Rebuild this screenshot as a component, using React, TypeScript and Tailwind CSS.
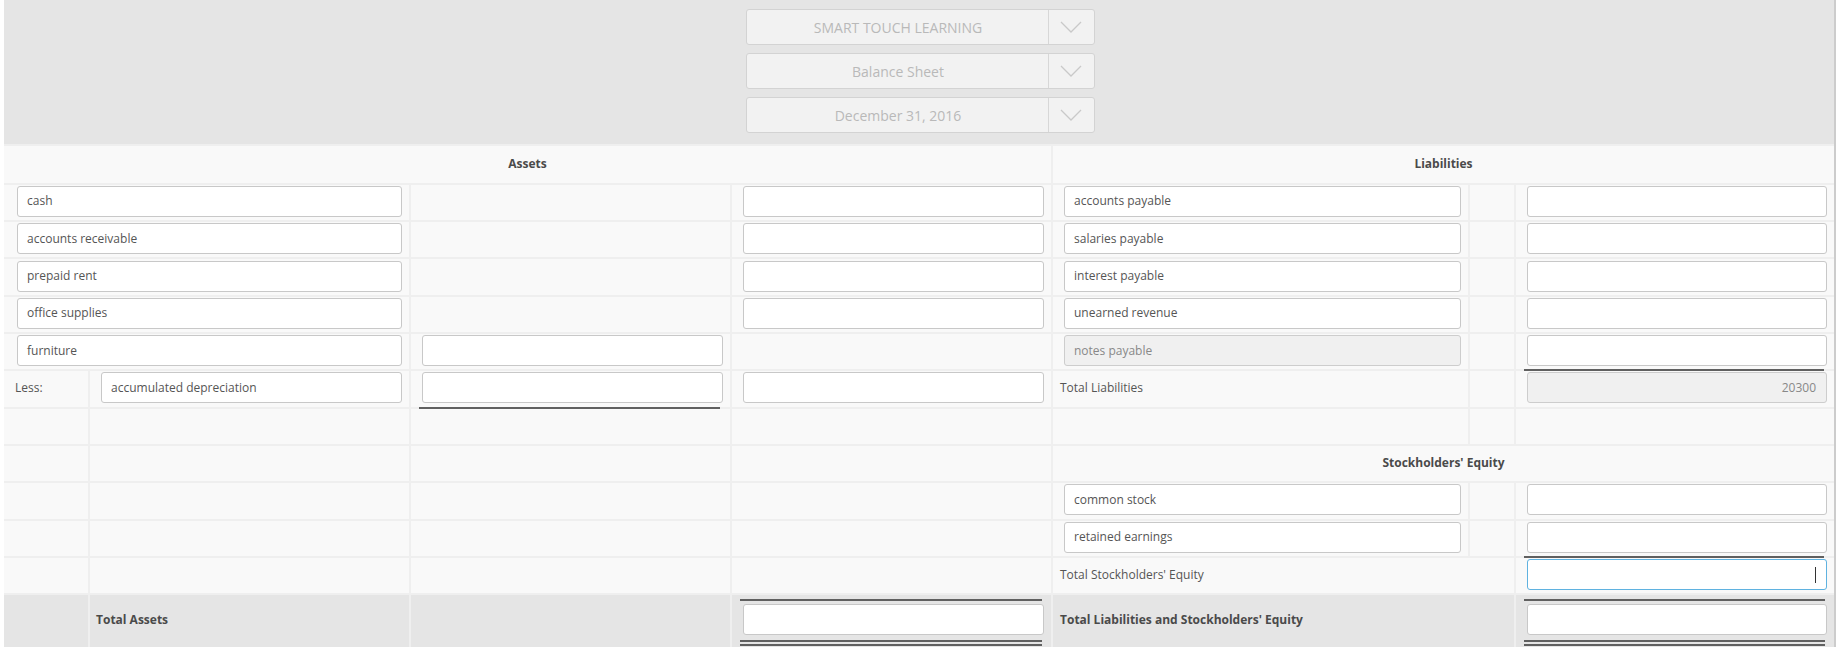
import type { ReactNode } from "react"

// column widths (outer, incl. 2px left rule)
const C1 = "w-[84px]"
const C2 = "w-[321px]"
const C12 = "w-[405px]"
const C3 = "w-[321px]"
const C4 = "w-[321px]"
const C5 = "w-[417px]"
const C6 = "w-[46px]"
const C56 = "w-[463px]"
const C7 = "w-[320px]"

function Chevron() {
  return (
    <svg width="22" height="12" viewBox="0 0 22 12" fill="none">
      <path d="M1 1 L11 11 L21 1" stroke="#c9c9c9" strokeWidth="1.3" />
    </svg>
  )
}

function Dropdown({ label }: { label: string }) {
  return (
    <div className="flex h-[36px] w-[349px] rounded-[3px] border border-[#d3d3d3] bg-[#f2f2f2]">
      <div className="flex flex-1 items-center justify-center pl-[2px] text-[14px] text-[#b9b9b9]">{label}</div>
      <div className="flex w-[46px] items-center justify-center border-l border-[#d7d7d7]">
        <Chevron />
      </div>
    </div>
  )
}

function Field({
  text,
  disabled,
  right,
  focused,
}: {
  text?: string
  disabled?: boolean
  right?: boolean
  focused?: boolean
}) {
  const tone = disabled
    ? "bg-[#f0f0f0] text-[#888] border-[#cdcdcd]"
    : focused
      ? "bg-white text-[#555] border-[#5fb2e0]"
      : "bg-white text-[#555] border-[#c8c8c8]"
  return (
    <div
      className={`flex h-[31px] w-full items-center rounded-[3px] border px-[9px] text-[12px] ${tone} ${
        right ? "justify-end pr-[10px]" : ""
      }`}
    >
      {text}
      {focused && <span className="h-[16px] w-[1px] bg-[#333]" />}
    </div>
  )
}

function Cell({
  w,
  first,
  under,
  pad,
  children,
}: {
  w: string
  first?: boolean
  under?: boolean
  pad?: string
  children?: ReactNode
}) {
  return (
    <div className={`flex shrink-0 flex-col ${w} ${first ? "" : "border-l-2 border-[#efefef]"}`}>
      <div className={`flex h-[35.33px] items-center pt-[1px] pb-[3px] ${pad ?? ""}`}>{children}</div>
      <div className="h-[2px] bg-[#efefef]">
        {under && <div className="ml-[8px] mr-[10px] h-full bg-[#606060]" />}
      </div>
    </div>
  )
}

const FP = "pl-[11px] pr-[7px]"
const FP1 = "pl-[13px] pr-[7px]"

function Label({ children, bold }: { children: ReactNode; bold?: boolean }) {
  return (
    <span className={`text-[12px] ${bold ? "font-bold text-[#4a4a4a]" : "text-[#555]"}`}>{children}</span>
  )
}

const assetRows = ["cash", "accounts receivable", "prepaid rent", "office supplies"]
const liabRows = ["accounts payable", "salaries payable", "interest payable", "unearned revenue"]

function EmptyLeft() {
  return (
    <>
      <Cell w={C1} first />
      <Cell w={C2} />
      <Cell w={C3} />
      <Cell w={C4} />
    </>
  )
}

export default function App() {
  return (
    <div className="h-[647px] w-[1840px] overflow-hidden bg-white font-['Open_Sans',sans-serif]">
      <div className="ml-[4px] w-[1832px] border-r-2 border-[#cccccc] bg-[#f9f9f9]">
        <div className="flex h-[144px] flex-col items-center gap-[8px] bg-[#e5e5e5] pt-[9px] pl-[2px]">
          <Dropdown label="SMART TOUCH LEARNING" />
          <Dropdown label="Balance Sheet" />
          <Dropdown label="December 31, 2016" />
        </div>

        {/* header */}
        <div className="flex border-t-2 border-[#efefef]">
          <div className="flex w-[1047px] shrink-0 flex-col">
            <div className="flex h-[36.7px] items-center justify-center">
              <Label bold>Assets</Label>
            </div>
            <div className="h-[2px] bg-[#efefef]" />
          </div>
          <div className="flex w-[783px] shrink-0 flex-col border-l-2 border-[#efefef]">
            <div className="flex h-[36.7px] items-center justify-center">
              <Label bold>Liabilities</Label>
            </div>
            <div className="h-[2px] bg-[#efefef]" />
          </div>
        </div>

        {assetRows.map((a, i) => (
          <div key={a} className="flex">
            <Cell w={C12} first pad={FP1}>
              <Field text={a} />
            </Cell>
            <Cell w={C3} />
            <Cell w={C4} pad={FP}>
              <Field />
            </Cell>
            <Cell w={C5} pad={FP}>
              <Field text={liabRows[i]} />
            </Cell>
            <Cell w={C6} />
            <Cell w={C7} pad={FP}>
              <Field />
            </Cell>
          </div>
        ))}

        {/* furniture / notes payable */}
        <div className="flex">
          <Cell w={C12} first pad={FP1}>
            <Field text="furniture" />
          </Cell>
          <Cell w={C3} pad={FP}>
            <Field />
          </Cell>
          <Cell w={C4} />
          <Cell w={C5} pad={FP}>
            <Field text="notes payable" disabled />
          </Cell>
          <Cell w={C6} />
          <Cell w={C7} pad={FP} under>
            <Field />
          </Cell>
        </div>

        {/* less / total liabilities */}
        <div className="flex">
          <Cell w={C1} first pad="pl-[11px]">
            <Label>Less:</Label>
          </Cell>
          <Cell w={C2} pad={FP}>
            <Field text="accumulated depreciation" />
          </Cell>
          <Cell w={C3} pad={FP} under>
            <Field />
          </Cell>
          <Cell w={C4} pad={FP}>
            <Field />
          </Cell>
          <Cell w={C5} pad="pl-[7px]">
            <Label>Total Liabilities</Label>
          </Cell>
          <Cell w={C6} />
          <Cell w={C7} pad={FP}>
            <Field text="20300" disabled right />
          </Cell>
        </div>

        {/* empty */}
        <div className="flex">
          <EmptyLeft />
          <Cell w={C5} />
          <Cell w={C6} />
          <Cell w={C7} />
        </div>

        {/* stockholders' equity header */}
        <div className="flex">
          <EmptyLeft />
          <Cell w="w-[783px]" pad="justify-center pt-0 pb-0">
            <Label bold>Stockholders' Equity</Label>
          </Cell>
        </div>

        <div className="flex">
          <EmptyLeft />
          <Cell w={C5} pad={FP}>
            <Field text="common stock" />
          </Cell>
          <Cell w={C6} />
          <Cell w={C7} pad={FP}>
            <Field />
          </Cell>
        </div>

        <div className="flex">
          <EmptyLeft />
          <Cell w={C5} pad={FP}>
            <Field text="retained earnings" />
          </Cell>
          <Cell w={C6} />
          <Cell w={C7} pad={FP} under>
            <Field />
          </Cell>
        </div>

        <div className="flex">
          <EmptyLeft />
          <Cell w={C56} pad="pl-[7px]">
            <Label>Total Stockholders' Equity</Label>
          </Cell>
          <Cell w={C7} pad={FP}>
            <Field focused right />
          </Cell>
        </div>

        {/* totals */}
        <div className="flex h-[56px] bg-[#e5e5e5]">
          <div className={`${C1} shrink-0`} />
          <div className={`${C2} shrink-0 border-l-2 border-[#efefef] pl-[6px]`}>
            <div className="mt-[9px] flex h-[31px] items-center">
              <Label bold>Total Assets</Label>
            </div>
          </div>
          <div className={`${C3} shrink-0 border-l-2 border-[#efefef]`} />
          <div className={`${C4} shrink-0 border-l-2 border-[#efefef]`}>
            <TotalBox />
          </div>
          <div className={`${C56} shrink-0 border-l-2 border-[#efefef] pl-[7px]`}>
            <div className="mt-[9px] flex h-[31px] items-center">
              <Label bold>Total Liabilities and Stockholders' Equity</Label>
            </div>
          </div>
          <div className={`${C7} shrink-0 border-l-2 border-[#efefef]`}>
            <TotalBox />
          </div>
        </div>
      </div>
    </div>
  )
}

function TotalBox() {
  return (
    <div className="flex flex-col pt-[4px]">
      <div className="ml-[8px] mr-[9px] h-[2px] bg-[#606060]" />
      <div className="mt-[3px] pl-[11px] pr-[7px]">
        <Field />
      </div>
      <div className="ml-[8px] mr-[9px] mt-[5px] h-[2px] bg-[#606060]" />
      <div className="ml-[8px] mr-[9px] mt-[2px] h-[2px] bg-[#606060]" />
    </div>
  )
}
